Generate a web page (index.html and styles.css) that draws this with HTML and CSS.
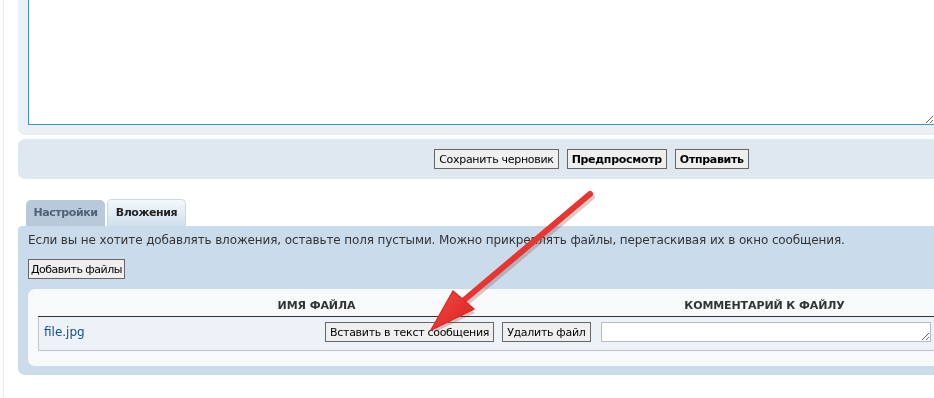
FILE: index.html
```html
<!DOCTYPE html>
<html lang="ru">
<head>
    <meta charset="UTF-8">
    <title>Вложения</title>
    <link rel="stylesheet" href="styles.css">
</head>
<body>

    <div class="page">
        <div class="panel editor">
            <textarea class="message"></textarea>
        </div>

        <div class="panel submit-row">
            <button>Сохранить черновик</button>
            <button class="bold">Предпросмотр</button>
            <button class="bold">Отправить</button>
        </div>

        <ul class="tabs">
            <li>Настройки</li>
            <li class="active">Вложения</li>
        </ul>

        <div class="panel attach">
            <p class="hint">Если вы не хотите добавлять вложения, оставьте поля пустыми. Можно прикреплять файлы, перетаскивая их в окно сообщения.</p>
            <button class="add">Добавить файлы</button>

            <div class="inner">
                <table class="files">
                    <thead>
                        <tr>
                            <th class="col-name">Имя файла</th>
                            <th class="col-comment">Комментарий к файлу</th>
                            <th></th>
                        </tr>
                    </thead>
                    <tbody>
                        <tr>
                            <td class="name">
                                <a href="#">file.jpg</a>
                                <span class="actions">
                                    <button>Вставить в текст сообщения</button>
                                    <button>Удалить файл</button>
                                </span>
                            </td>
                            <td><textarea class="comment"></textarea></td>
                            <td></td>
                        </tr>
                    </tbody>
                </table>
            </div>
        </div>
    </div>

    <!-- стрелка поверх скриншота -->
    <svg class="arrow" width="934" height="398" viewBox="0 0 934 398">
        <defs>
            <linearGradient id="red" x1="0" y1="0" x2="1" y2="1">
                <stop offset="0" stop-color="#f24a45"/>
                <stop offset="1" stop-color="#d8221f"/>
            </linearGradient>
        </defs>
        <g opacity="0.25" transform="translate(2 3)">
            <line x1="590" y1="194" x2="463" y2="301" stroke="#7a3030" stroke-width="6" stroke-linecap="round"/>
            <polygon points="454,292 473,310 431,330" fill="#7a3030"/>
        </g>
        <line x1="590" y1="194" x2="463" y2="301" stroke="url(#red)" stroke-width="6" stroke-linecap="round"/>
        <polygon points="453,291 474,309 431,330" fill="url(#red)" stroke="#e02b28" stroke-width="1.5" stroke-linejoin="round"/>
    </svg>

</body>
</html>
```

FILE: styles.css
```css
body {
    margin: 0;
    overflow: hidden;
    background: #fff;
    font-family: "DejaVu Sans", Verdana, sans-serif;
    color: #333;
}
.page {
    width: 1147px;
    margin: -40px 0 0 3px;
    padding-left: 14px;
    border-left: 1px solid #e4e9ee;
    height: 460px;
}
.panel {
    border-radius: 7px;
}
.editor {
    background: #eaeff3;
    padding: 10px;
}
.message {
    display: block;
    box-sizing: border-box;
    width: 907px;
    height: 155px;
    margin: 0;
    border: 1px solid #3b94c5;
    background: #fff;
}
.submit-row {
    margin-top: 4px;
    height: 40px;
    box-sizing: border-box;
    padding-top: 10px;
    background: #dfe8f0;
    text-align: center;
    font-size: 0;
}
button {
    font-family: "DejaVu Sans", Verdana, sans-serif;
    font-size: 11px;
    letter-spacing: -0.3px;
    height: 20px;
    padding: 0 4px;
    margin: 0;
    border: 1px solid #666;
    background: #efefef;
    color: #000;
    cursor: pointer;
    vertical-align: top;
}
button:hover {
    background: #e4e4e4;
}
.submit-row button {
    margin: 0 4px;
}
.bold {
    font-weight: bold;
}
.add {
    padding: 0 2px;
    letter-spacing: -0.5px;
}
.tabs {
    list-style: none;
    display: flex;
    gap: 2px;
    margin: 21px 0 0 8px;
    padding: 0;
    height: 26px;
}
.tabs li {
    box-sizing: border-box;
    width: 79px;
    height: 26px;
    line-height: 26px;
    text-align: center;
    font-size: 11px;
    font-weight: bold;
    letter-spacing: -0.4px;
    color: #4f6277;
    background: #b8c9d9;
    border-radius: 5px 5px 0 0;
}
.tabs li.active {
    height: 27px;
    margin-top: -1px;
    line-height: 25px;
    color: #222;
    background: linear-gradient(#f4f8fb, #cfdfec);
    border: 1px solid #cbd8e4;
    border-bottom: none;
}
.attach {
    background: #cadceb;
    padding: 6px 10px 9px;
    border-top-left-radius: 4px;
}
.hint {
    margin: 0 0 10px;
    font-size: 12px;
    line-height: 17px;
    letter-spacing: -0.12px;
    color: #333;
}
.inner {
    margin-top: 10px;
    background: #f8f9fa;
    border-radius: 7px;
    padding: 5px 10px 15px;
}
.files {
    border-collapse: collapse;
    width: 100%;
}
.files th {
    height: 22px;
    padding: 0;
    font-size: 11px;
    font-weight: bold;
    letter-spacing: -0.1px;
    text-transform: uppercase;
    color: #333;
    text-align: center;
    border-bottom: 1px solid #333;
}
.col-name {
    width: 556px;
}
.col-comment {
    width: 336px;
}
.files td {
    background: #ecf2f7;
    border-bottom: 1px solid #bfc6cd;
    padding: 5px 4px 5px 6px;
    height: 23px;
    vertical-align: top;
    font-size: 12px;
}
.files td.name {
    border-left: 1px solid #bfc6cd;
    padding-left: 5px;
}
.name a {
    display: inline-block;
    margin-top: 3px;
    color: #105289;
    text-decoration: none;
}
.actions {
    float: right;
    display: flex;
    gap: 8px;
}
.comment {
    display: block;
    box-sizing: border-box;
    width: 330px;
    height: 20px;
    margin: 0;
    border: 1px solid #b4bcc4;
    background: #fff;
}
.arrow {
    position: absolute;
    top: 0;
    left: 0;
    pointer-events: none;
}
```
